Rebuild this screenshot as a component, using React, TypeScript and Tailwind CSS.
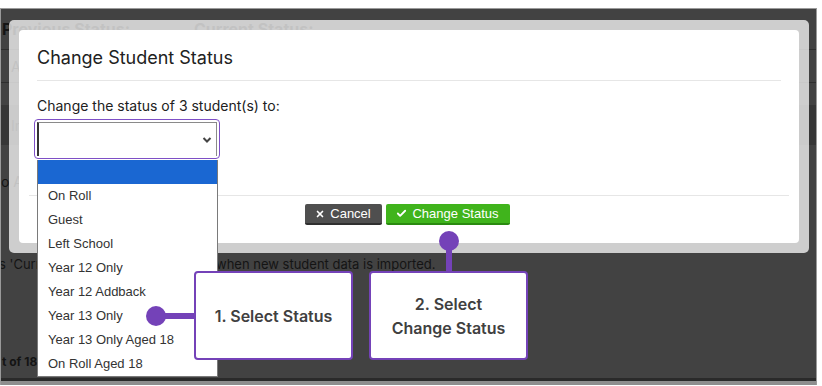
import { Check, X } from 'lucide-react';

const options = [
  '',
  'On Roll',
  'Guest',
  'Left School',
  'Year 12 Only',
  'Year 12 Addback',
  'Year 13 Only',
  'Year 13 Only Aged 18',
  'On Roll Aged 18',
];

function BackgroundPage() {
  // page behind the dimmed overlay
  return (
    <div className="absolute inset-0 flex flex-col font-['Inter',sans-serif] text-[#141414]">
      <div className="flex h-[30px] items-end pl-[1px] text-[16px] font-bold leading-[20px]">
        <span className="w-[192px]">Previous Status:</span>
        <span>Current Status:</span>
      </div>
      <div className="mt-[10px] h-[34px] border-y border-[#2e2e2e] pl-[10px] pt-[6px] text-[14px]">A</div>
      <div className="mt-[22px] flex h-[40px] items-center bg-[#363636] pl-[10px] text-[14px]">Ina</div>
      <div className="mt-[26px] text-[14px]">o A</div>
      <div className="mt-[63px] flex text-[13px]">
        <span className="-ml-[2px] w-[217px]">s 'Current Status' is updated</span>
        <span>when new student data is imported.</span>
      </div>
      <div className="mt-[78px] pl-[1px] text-[12px] font-bold">t of 180</div>
      <div className="mt-auto h-[3px] bg-[#2a2a2a]" />
      <div className="h-[4px] bg-[#8e8e8e]" />
    </div>
  );
}

function Dialog() {
  return (
    <div className="absolute left-[8px] top-[11px] h-[233px] w-[800px] rounded-[5px] bg-[rgba(255,255,255,0.74)] p-[10px]">
      <div className="flex h-full flex-col rounded-[4px] bg-white px-[10px] font-['Inter',sans-serif] text-[#212121]">
        <div className="mx-[8px] border-b border-[#e6e6e6] pb-[12px] pt-[18px] text-[18px] leading-[20px]">
          Change Student Status
        </div>
        <div className="mx-[8px] pt-[16px] text-[14px] leading-[17px]">Change the status of 3 student(s) to:</div>
        <div className="ml-[5px] mt-[5px] w-[186px] rounded-[4px] border border-[#7e4fc6] p-[2px]">
          <div className="relative h-[34px] border-l-[2px] border-r border-t border-[#8a8a8a] border-l-[#333] bg-white">
            <svg className="absolute right-[4px] top-[13px]" width="10" height="8" viewBox="0 0 10 8">
              <path d="M1.5 2 L5 5.5 L8.5 2" fill="none" stroke="#444" strokeWidth="2" />
            </svg>
          </div>
        </div>
        <div className="mt-[36px] border-t border-[#e6e6e6]" />
        <div className="flex justify-center gap-[4px] pr-[4px] pt-[8px] font-['Liberation_Sans',Arial,sans-serif] text-[13px] text-white">
          <button className="flex h-[21px] w-[77px] items-center justify-center gap-[5px] rounded-[2px] border-b-[2px] border-[#2f2f2f] bg-[#4f4f4f]">
            <X size={10} strokeWidth={4} />
            Cancel
          </button>
          <button className="flex h-[21px] w-[124px] items-center justify-center gap-[5px] rounded-[2px] border-b-[2px] border-[#2a8a10] bg-[#40b41c]">
            <Check size={11} strokeWidth={4} />
            Change Status
          </button>
        </div>
      </div>
    </div>
  );
}

function OptionList() {
  // native select popup, open over the page
  return (
    <div className="absolute left-[36px] top-[151px] flex w-[181px] flex-col border-x border-b border-[#7a7a7a] bg-white font-['Liberation_Sans',Arial,sans-serif] text-[13px] text-[#333]">
      {options.map((o, i) => (
        <div
          key={i}
          className={`flex h-[24px] items-center pl-[10px] ${i === 0 ? 'bg-[#1a67d2]' : ''}`}
        >
          {o}
        </div>
      ))}
    </div>
  );
}

function Callouts() {
  const box =
    "flex h-[89px] w-[159px] items-center justify-center rounded-[4px] border-[2px] border-[#7442b8] bg-white text-center font-['Inter',sans-serif] text-[16px] font-semibold leading-[24px] text-[#404040]";
  return (
    <>
      {/* 1. Select Status */}
      <div className="absolute left-[145px] top-[262px] flex items-center">
        <div className="h-[20px] w-[20px] rounded-full bg-[#7442b8]" />
        <div className="-ml-[10px] h-[6px] w-[40px] bg-[#7442b8]" />
        <div className={`-ml-[2px] ${box}`}>1. Select Status</div>
      </div>

      {/* 2. Select Change Status */}
      <div className="absolute left-[368px] top-[222px] flex flex-col items-center">
        <div className="h-[20px] w-[20px] rounded-full bg-[#7442b8]" />
        <div className="-mt-[10px] h-[32px] w-[6px] bg-[#7442b8]" />
        <div className={`-mt-[2px] ${box}`}>
          2. Select
          <br />
          Change Status
        </div>
      </div>
    </>
  );
}

export default function App() {
  return (
    <div className="relative h-[386px] w-[822px] overflow-hidden bg-white">
      <div className="absolute left-0 top-[8px] h-[377px] w-[817px] overflow-hidden border border-b-0 border-[#9a9a9a] bg-[#424242]">
        <BackgroundPage />
        <Dialog />
        <OptionList />
        <Callouts />
      </div>
    </div>
  );
}
